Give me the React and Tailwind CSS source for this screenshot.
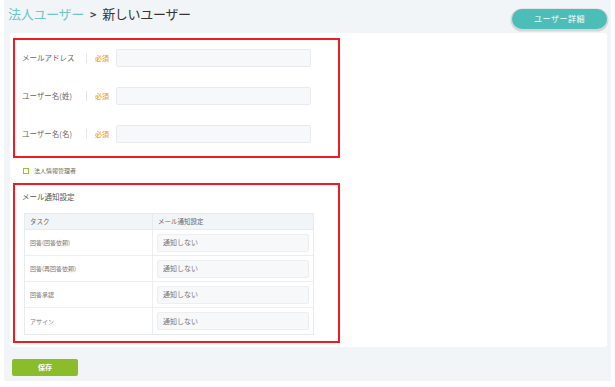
import React from 'react'

const jp = { fontFamily: '"Noto Sans CJK JP", "Noto Sans", sans-serif' }

const fields = ['メールアドレス', 'ユーザー名(姓)', 'ユーザー名(名)']
const tasks = ['回答(回答依頼)', '回答(再回答依頼)', '回答承認', 'アサイン']

function App() {
  return (
    <div className="w-[615px] h-[387px] bg-white overflow-hidden" style={jp}>
      <div className="ml-[4px] w-[607px] h-[381px] bg-[#f2f5f7] flex flex-col">
        {/* header */}
        <div className="h-[33px] shrink-0 flex items-start justify-between pl-[4px] pr-[4px]">
          <div className="mt-[5px] text-[13px] leading-[18px] tracking-[-0.3px] flex items-center">
            <span className="text-[#6ec6cb]">法人ユーザー</span>
            <span className="text-[#444] font-bold text-[11px] mx-[6px]">&gt;</span>
            <span className="text-[#333]">新しいユーザー</span>
          </div>
          <button className="mt-[9px] w-[95px] h-[20px] rounded-full bg-[#4dbdb8] text-white text-[8px] tracking-[0.5px] shadow-[0_1px_0_1.5px_#d4d7d9]">
            ユーザー詳細
          </button>
        </div>

        {/* card */}
        <div className="ml-[6px] mr-[4px] h-[314px] shrink-0 bg-white rounded-[3px] pl-[3px] pt-[5px]">
          <div className="w-[327px] h-[120px] border-2 border-[#ee1c22] pt-[9px] flex flex-col gap-[20px]">
            {fields.map((f) => (
              <div key={f} className="flex items-center h-[18px]">
                <span className="w-[71px] pl-[7px] text-[7.5px] text-[#666]">{f}</span>
                <span className="w-px h-[10px] bg-[#e6e6e6]" />
                <span className="w-[29px] pl-[8px] text-[7px] font-medium text-[#f0a030]">必須</span>
                <div className="w-[195px] h-[18px] bg-[#f7f8fa] border border-[#e8eaed] rounded-[2px]" />
              </div>
            ))}
          </div>

          <div className="h-[25px] flex items-center pl-[10px]">
            <span className="w-[6px] h-[6px] border border-[#8fc43c] mr-[5px]" />
            <span className="text-[6px] text-[#666]">法人情報管理者</span>
          </div>

          <div className="w-[327px] h-[160px] border-2 border-[#ee1c22] pt-[6px] pl-[7px]">
            <div className="text-[7.5px] text-[#555] h-[12px] leading-[12px]">メール通知設定</div>
            <div className="mt-[10px] ml-[2px] w-[290px] border border-[#e8ebee]">
              <div className="flex h-[16px] bg-[#f2f5f7] text-[6.5px] text-[#666] border-b border-[#e8ebee]">
                <div className="w-[128px] pl-[5px] flex items-center border-r border-[#e8ebee]">タスク</div>
                <div className="flex-1 pl-[5px] flex items-center">メール通知設定</div>
              </div>
              {tasks.map((t, i) => (
                <div key={t} className={`flex h-[26px] ${i < tasks.length - 1 ? 'border-b border-[#eceef0]' : ''}`}>
                  <div className="w-[128px] pl-[5px] flex items-center border-r border-[#eceef0] text-[6px] text-[#777]">{t}</div>
                  <div className="flex-1 flex items-center pl-[4px]">
                    <div className="w-[152px] h-[18px] bg-[#f7f8fa] border border-[#eceef0] rounded-[2px] pl-[5px] flex items-center text-[7px] text-[#777]">
                      通知しない
                    </div>
                  </div>
                </div>
              ))}
            </div>
          </div>
        </div>

        <div className="pl-[8px] pt-[12px] flex">
          <button className="w-[66px] h-[17px] rounded-[2px] bg-[#8bbd2b] text-white text-[7px] font-bold">
            保存
          </button>
        </div>
      </div>
    </div>
  )
}

export default App
